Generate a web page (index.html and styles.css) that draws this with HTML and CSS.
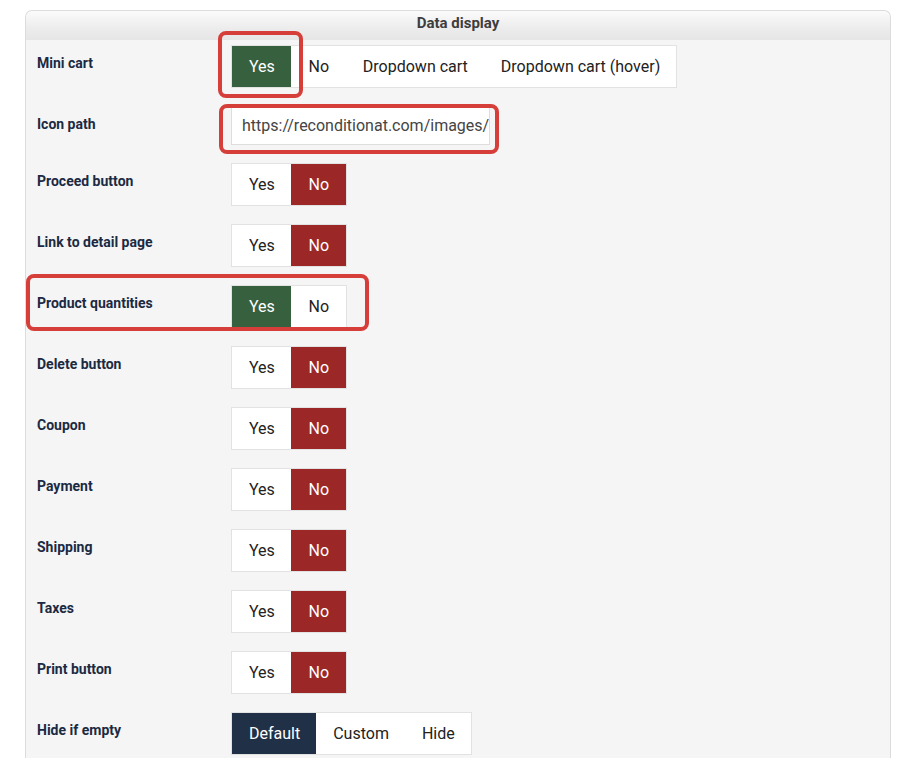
FILE: index.html
```html
<!DOCTYPE html>
<html lang="en">
<head>
<meta charset="utf-8">
<title>Data display</title>
<link rel="stylesheet" href="styles.css">
</head>
<body>
<section class="panel">
  <header class="panel-head">Data display</header>
  <div class="panel-body">
    <div class="row">
      <div class="label">Mini cart</div>
      <div class="btn-group">
        <span class="btn on-green">Yes</span>
        <span class="btn">No</span>
        <span class="btn">Dropdown cart</span>
        <span class="btn">Dropdown cart (hover)</span>
      </div>
    </div>
    <div class="row">
      <div class="label">Icon path</div>
      <input class="text-input" type="text" value="https://reconditionat.com/images/">
    </div>
    <div class="row">
      <div class="label">Proceed button</div>
      <div class="btn-group"><span class="btn">Yes</span><span class="btn on-red">No</span></div>
    </div>
    <div class="row">
      <div class="label">Link to detail page</div>
      <div class="btn-group"><span class="btn">Yes</span><span class="btn on-red">No</span></div>
    </div>
    <div class="row">
      <div class="label">Product quantities</div>
      <div class="btn-group"><span class="btn on-green">Yes</span><span class="btn">No</span></div>
    </div>
    <div class="row">
      <div class="label">Delete button</div>
      <div class="btn-group"><span class="btn">Yes</span><span class="btn on-red">No</span></div>
    </div>
    <div class="row">
      <div class="label">Coupon</div>
      <div class="btn-group"><span class="btn">Yes</span><span class="btn on-red">No</span></div>
    </div>
    <div class="row">
      <div class="label">Payment</div>
      <div class="btn-group"><span class="btn">Yes</span><span class="btn on-red">No</span></div>
    </div>
    <div class="row">
      <div class="label">Shipping</div>
      <div class="btn-group"><span class="btn">Yes</span><span class="btn on-red">No</span></div>
    </div>
    <div class="row">
      <div class="label">Taxes</div>
      <div class="btn-group"><span class="btn">Yes</span><span class="btn on-red">No</span></div>
    </div>
    <div class="row">
      <div class="label">Print button</div>
      <div class="btn-group"><span class="btn">Yes</span><span class="btn on-red">No</span></div>
    </div>
    <div class="row">
      <div class="label">Hide if empty</div>
      <div class="btn-group">
        <span class="btn on-navy">Default</span>
        <span class="btn">Custom</span>
        <span class="btn">Hide</span>
      </div>
    </div>

    <!-- callout frames drawn over the settings -->
    <div class="callout callout-minicart"></div>
    <div class="callout callout-iconpath"></div>
    <div class="callout callout-quantities"></div>
  </div>
</section>
</body>
</html>
```

FILE: styles.css
```css
html, body {
  margin: 0;
  padding: 0;
  background: #ffffff;
}

body {
  font-family: Roboto, "Liberation Sans", Arial, sans-serif;
  padding: 10px 0 0 25px;
  overflow: hidden;
}

.panel {
  width: 864px;
  height: 747px;
  border: 1px solid #dcdcdc;
  border-bottom: none;
  border-radius: 7px 7px 0 0;
  background: #f5f5f5;
  overflow: hidden;
}

.panel-head {
  height: 29px;
  line-height: 24px;
  text-align: center;
  font-weight: 700;
  font-size: 15px;
  color: #3d3d3d;
  border-radius: 6px 6px 0 0;
  background: linear-gradient(to bottom, #fbfbfb 0%, #ececec 60%, #e6e6e6 100%);
}

.panel-body {
  position: relative;
  padding: 5px 0 0 0;
}

.row {
  display: flex;
  align-items: flex-start;
  margin-bottom: 18px;
}

.label {
  width: 194px;
  padding: 8px 0 0 11px;
  font-size: 14px;
  line-height: 20px;
  font-weight: 700;
  color: #1b2a42;
}

.btn-group {
  display: flex;
  height: 41px;
  border: 1px solid #e2e2e2;
  background: #ffffff;
}

.btn {
  box-sizing: border-box;
  min-width: 55px;
  display: flex;
  align-items: center;
  justify-content: center;
  padding: 0 16px 0 17px;
  font-size: 16px;
  color: #222222;
  background: #ffffff;
}

.on-green {
  background: #37603f;
  color: #ffffff;
}

.on-red {
  background: #9b2727;
  color: #ffffff;
}

.on-navy {
  background: #1f3047;
  color: #ffffff;
}

.text-input {
  box-sizing: border-box;
  width: 259px;
  height: 39px;
  margin: 0;
  padding: 0 0 0 10px;
  border: 1px solid #dedede;
  background: #ffffff;
  font-family: Roboto, "Liberation Sans", Arial, sans-serif;
  font-size: 16px;
  color: #444444;
  outline: none;
}

.callout {
  position: absolute;
  box-sizing: border-box;
  border: 4px solid #d63e3a;
  border-radius: 8px;
}

.callout-minicart {
  left: 192px;
  top: -9px;
  width: 85px;
  height: 67px;
}

.callout-iconpath {
  left: 193px;
  top: 64px;
  width: 280px;
  height: 50px;
}

.callout-quantities {
  left: 0px;
  top: 234px;
  width: 343px;
  height: 57px;
}
```
